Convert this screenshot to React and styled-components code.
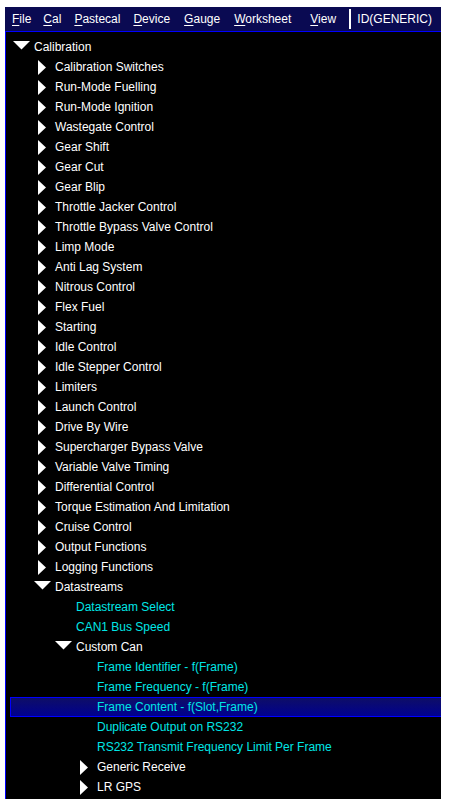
import React from 'react';
import styled, { createGlobalStyle } from 'styled-components';

const GlobalStyle = createGlobalStyle`
  html, body {
    margin: 0;
    padding: 0;
    background: #ffffff;
    overflow: hidden;
  }
`;

const Window = styled.div`
  margin: 7px 0 0 5px;
  width: 436px;
  height: 792px;
  display: flex;
  flex-direction: column;
  font-family: "Liberation Sans", Arial, sans-serif;
  font-size: 12px;
`;

const MenuBar = styled.div`
  height: 24px;
  background: #0a0a52;
  border-bottom: 1px solid #0000ff;
  display: flex;
  align-items: center;
  padding-left: 7px;
  color: #ffffff;
`;

const MenuItem = styled.span`
  margin-right: ${p => p.$gap || 13}px;
  white-space: nowrap;
  u { text-decoration: underline; text-underline-offset: 2px; }
`;

const Separator = styled.span`
  width: 2px;
  height: 20px;
  border-left: 1px solid #ffffff;
  border-right: 1px solid #ffffff;
  margin: 0 6px 0 auto;
`;

const DeviceId = styled.span`
  margin-right: 9px;
  white-space: nowrap;
`;

const TreePanel = styled.div`
  flex: 1;
  background: #000000;
  border-left: 1px solid #0000ff;
  padding: 5px 0 0 4px;
  overflow: hidden;
`;

const Row = styled.div`
  height: 20px;
  box-sizing: border-box;
  display: flex;
  align-items: center;
  padding-left: ${p => p.$level * 21}px;
  color: ${p => (p.$leaf ? '#00e6e6' : '#ffffff')};
  white-space: nowrap;
  ${p => p.$selected && `
    border: 1px solid #0000ff;
    border-right: none;
    background: linear-gradient(180deg, #0e0e66 0%, #00008f 100%);
    padding-left: ${p.$level * 21 - 1}px;
  `}
`;

const IconBox = styled.span`
  width: 24px;
  height: 20px;
  flex: none;
  display: flex;
  align-items: center;
`;

const Label = styled.span`
  line-height: 20px;
`;

const DownArrow = () => (
  <svg width="17" height="9" viewBox="0 0 17 9" style={{ marginLeft: 3, marginTop: -3 }}>
    <polygon points="0,0 17,0 8.5,8.5" fill="#ffffff" />
  </svg>
);

const RightArrow = () => (
  <svg width="8" height="15" viewBox="0 0 8 15" style={{ marginLeft: 7 }}>
    <polygon points="0,0 8,7.5 0,15" fill="#ffffff" />
  </svg>
);

const menus = [
  ['File', 12], ['Cal', 13], ['Pastecal', 13], ['Device', 14],
  ['Gauge', 14], ['Worksheet', 19], ['View', 13],
];

// [label, level, type, selected] type: 'open' | 'closed' | 'leaf'
const tree = [
  ['Calibration', 0, 'open'],
  ['Calibration Switches', 1, 'closed'],
  ['Run-Mode Fuelling', 1, 'closed'],
  ['Run-Mode Ignition', 1, 'closed'],
  ['Wastegate Control', 1, 'closed'],
  ['Gear Shift', 1, 'closed'],
  ['Gear Cut', 1, 'closed'],
  ['Gear Blip', 1, 'closed'],
  ['Throttle Jacker Control', 1, 'closed'],
  ['Throttle Bypass Valve Control', 1, 'closed'],
  ['Limp Mode', 1, 'closed'],
  ['Anti Lag System', 1, 'closed'],
  ['Nitrous Control', 1, 'closed'],
  ['Flex Fuel', 1, 'closed'],
  ['Starting', 1, 'closed'],
  ['Idle Control', 1, 'closed'],
  ['Idle Stepper Control', 1, 'closed'],
  ['Limiters', 1, 'closed'],
  ['Launch Control', 1, 'closed'],
  ['Drive By Wire', 1, 'closed'],
  ['Supercharger Bypass Valve', 1, 'closed'],
  ['Variable Valve Timing', 1, 'closed'],
  ['Differential Control', 1, 'closed'],
  ['Torque Estimation And Limitation', 1, 'closed'],
  ['Cruise Control', 1, 'closed'],
  ['Output Functions', 1, 'closed'],
  ['Logging Functions', 1, 'closed'],
  ['Datastreams', 1, 'open'],
  ['Datastream Select', 2, 'leaf'],
  ['CAN1 Bus Speed', 2, 'leaf'],
  ['Custom Can', 2, 'open'],
  ['Frame Identifier - f(Frame)', 3, 'leaf'],
  ['Frame Frequency - f(Frame)', 3, 'leaf'],
  ['Frame Content - f(Slot,Frame)', 3, 'leaf', true],
  ['Duplicate Output on RS232', 3, 'leaf'],
  ['RS232 Transmit Frequency Limit Per Frame', 3, 'leaf'],
  ['Generic Receive', 3, 'closed'],
  ['LR GPS', 3, 'closed'],
];

export default function App() {
  return (
    <>
      <GlobalStyle />
      <Window>
        <MenuBar>
          {menus.map(([m, gap]) => (
            <MenuItem key={m} $gap={gap}><u>{m[0]}</u>{m.slice(1)}</MenuItem>
          ))}
          <Separator />
          <DeviceId>ID(GENERIC)</DeviceId>
        </MenuBar>
        <TreePanel>
          {tree.map(([label, level, type, selected]) => (
            <Row key={label} $level={level} $leaf={type === 'leaf'} $selected={selected}>
              <IconBox>
                {type === 'open' && <DownArrow />}
                {type === 'closed' && <RightArrow />}
              </IconBox>
              <Label>{label}</Label>
            </Row>
          ))}
        </TreePanel>
      </Window>
    </>
  );
}
